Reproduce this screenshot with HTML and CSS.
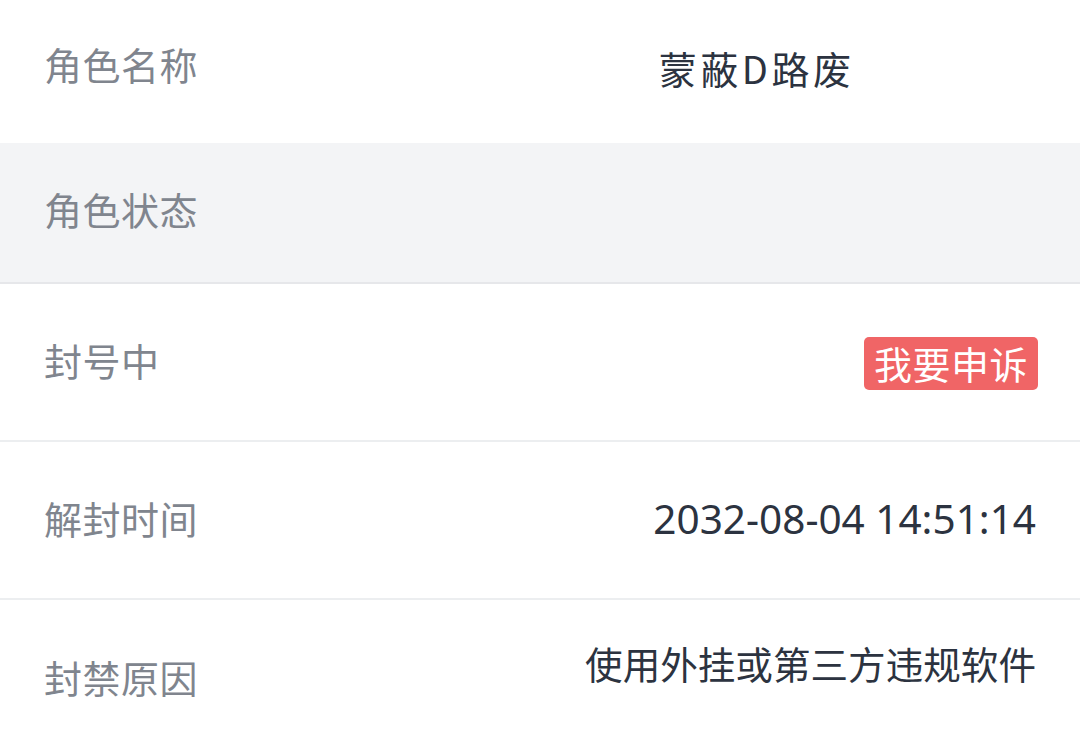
FILE: index.html
```html
<!DOCTYPE html>
<html lang="zh-CN">
<head>
<meta charset="utf-8">
<link rel="stylesheet" href="styles.css">
</head>
<body>
<div class="list">
  <div class="row row-name">
    <span class="label">角色名称</span>
    <div class="name-wrap">
      <span class="value name">蒙蔽D路废</span>
      <span class="ghost"></span>
    </div>
  </div>
  <div class="row row-head">
    <span class="label">角色状态</span>
  </div>
  <div class="row row-item">
    <span class="label">封号中</span>
    <button class="appeal">我要申诉</button>
  </div>
  <div class="row row-item">
    <span class="label">解封时间</span>
    <span class="value date">2032-08-04 14:51:14</span>
  </div>
  <div class="row row-item row-last">
    <span class="label">封禁原因</span>
    <span class="value reason">使用外挂或第三方违规软件</span>
  </div>
</div>
</body>
</html>
```

FILE: styles.css
```css
* { box-sizing: border-box; }
html, body {
  margin: 0;
  padding: 0;
  background: #ffffff;
}
body {
  width: 1080px;
  height: 750px;
  overflow: hidden;
  font-family: "Noto Sans CJK SC", "Noto Sans", sans-serif;
}
.list {
  display: flex;
  flex-direction: column;
}
.row {
  display: flex;
  align-items: center;
  justify-content: space-between;
  padding: 0 44px 4px 44px;
}
.row-name {
  height: 143px;
  background: #ffffff;
  padding-bottom: 16px;
}
.row-head {
  height: 141px;
  background: #f3f4f6;
  border-bottom: 2px solid #e6e7ea;
  padding-bottom: 8px;
}
.row-item {
  height: 158px;
  border-bottom: 2px solid #eceef0;
}
.row-last {
  border-bottom: none;
  height: 160px;
  align-items: flex-start;
  padding-bottom: 0;
}
.label {
  font-size: 38px;
  color: #80858e;
  letter-spacing: 0.5px;
  line-height: 1;
}
.row-last .label {
  padding-top: 58px;
}
.value {
  font-size: 38px;
  color: #2c3340;
  line-height: 1;
}
.name-wrap {
  display: flex;
  align-items: center;
}
.name {
  padding-top: 8px;
  letter-spacing: 3.5px;
  margin-right: -3.5px;
}
.ghost {
  display: block;
  width: 185px;
  height: 100px;
}
.date {
  font-family: "Noto Sans", sans-serif;
  font-size: 40.5px;
  padding-top: 2px;
}
.reason {
  font-size: 37.6px;
  padding-top: 44px;
}
.appeal {
  border: none;
  background: #f06566;
  color: #ffffff;
  font-family: "Noto Sans CJK SC", sans-serif;
  font-size: 38px;
  line-height: 1;
  padding: 7px 10px 8px 10px;
  border-radius: 5px;
  margin-top: 6px;
  margin-right: -2px;
  letter-spacing: 0.5px;
}
```
